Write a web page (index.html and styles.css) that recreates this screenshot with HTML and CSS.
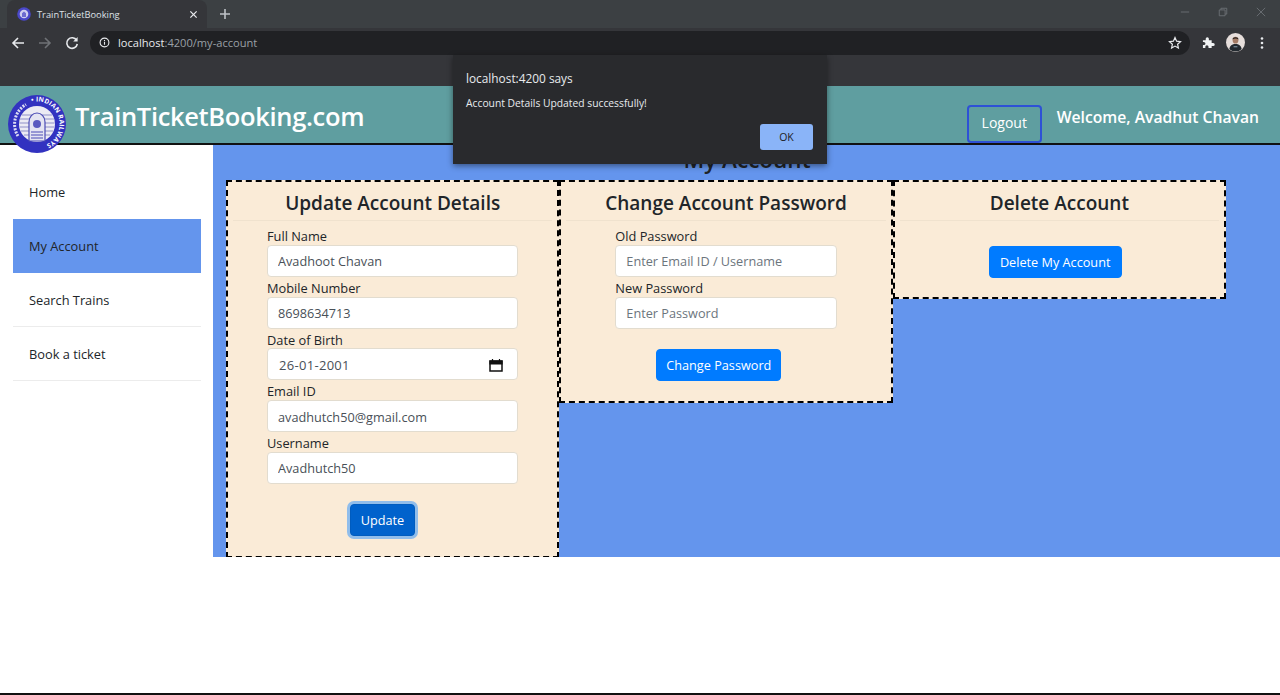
FILE: index.html
```html
<!DOCTYPE html>
<html lang="en">
<head>
  <meta charset="UTF-8" />
  <meta name="viewport" content="width=device-width, initial-scale=1" />
  <title>TrainTicketBooking</title>
  <link rel="stylesheet" href="styles.css">
</head>
<body>
  <!-- browser window top -->
  <div class="tabstrip">
    <div class="tab">
      <svg class="favicon" viewBox="0 0 14 14"><circle cx="7" cy="7" r="6.800" fill="#4a48c8"/><circle cx="7" cy="7" r="4.300" fill="#cfcdf0"/><path d="M5 10V6.200l2-1.700 2 1.700V10z" fill="#6d6bd0"/></svg>
      <span class="tab-title">TrainTicketBooking</span>
      <svg class="tab-close" viewBox="0 0 10 10"><path d="M1.500 1.500l7 7M8.500 1.500l-7 7" stroke="#e8eaed" stroke-width="1.400"/></svg>
    </div>
    <svg class="new-tab" viewBox="0 0 12 12"><path d="M6 1v10M1 6h10" stroke="#bdc1c6" stroke-width="1.600"/></svg>
    <div class="window-btns">
      <svg viewBox="0 0 12 12"><path d="M1 6h10" stroke="#70757a"/></svg>
      <svg viewBox="0 0 12 12"><path d="M1.500 3.500h7v7h-7zM3.500 3.500v-2h7v7h-2" fill="none" stroke="#70757a"/></svg>
      <svg viewBox="0 0 12 12"><path d="M1 1l10 10M11 1L1 11" stroke="#70757a"/></svg>
    </div>
  </div>
  <div class="toolbar">
    <svg class="tool" viewBox="0 0 14 14"><path d="M13 7H2M7 2L2 7l5 5" fill="none" stroke="#e8eaed" stroke-width="1.600"/></svg>
    <svg class="tool" viewBox="0 0 14 14"><path d="M1 7h11M7 2l5 5-5 5" fill="none" stroke="#6f7276" stroke-width="1.600"/></svg>
    <svg class="tool" viewBox="0 0 14 14"><path d="M11.600 4.200A5.300 5.300 0 1 0 12.300 8" fill="none" stroke="#e8eaed" stroke-width="1.600"/><path d="M12.600 1v4.400H8.200z" fill="#e8eaed"/></svg>
    <div class="omnibox">
      <svg class="info" viewBox="0 0 12 12"><circle cx="6" cy="6" r="4.800" fill="none" stroke="#e8eaed" stroke-width="1.200"/><path d="M6 5.200v3.200M6 3.400v1" stroke="#e8eaed" stroke-width="1.200"/></svg>
      <span class="url"><b>localhost</b>:4200/my-account</span>
      <svg class="star" viewBox="0 0 14 14"><path d="M7 1.600l1.600 3.600 3.900.4-2.900 2.600.8 3.800L7 10.100l-3.400 1.900.8-3.800L1.500 5.600l3.900-.4z" fill="none" stroke="#e8eaed" stroke-width="1.200"/></svg>
    </div>
    <svg class="puzzle" viewBox="0 0 14 14"><path d="M1 4.500h3V3a1.700 1.700 0 0 1 3.400 0v1.500h3v3H12a1.700 1.700 0 0 1 0 3.400h-1.600V13H7v-1.300a1.700 1.700 0 0 0-3.400 0V13H1V9.800h1a1.700 1.700 0 0 0 0-3.400H1z" fill="#f1f3f4"/></svg>
    <svg class="avatar" viewBox="0 0 20 20"><circle cx="10" cy="10" r="10" fill="#e6dedb"/><ellipse cx="10" cy="7.500" rx="3" ry="3.600" fill="#a47c66"/><path d="M6.800 6.800C6.800 3.800 13.200 3.800 13.200 6.800 11.500 5.600 8.500 5.600 6.800 6.800z" fill="#221c1a"/><path d="M3.500 17c.5-4 3-5.500 6.500-5.500s6 1.500 6.500 5.500a10 10 0 0 1-13 0z" fill="#232a30"/><path d="M8 14.500h4" stroke="#8fa6b8"/></svg>
    <svg class="kebab" viewBox="0 0 4 14"><circle cx="2" cy="2.500" r="1.300" fill="#e8eaed"/><circle cx="2" cy="7" r="1.300" fill="#e8eaed"/><circle cx="2" cy="11.500" r="1.300" fill="#e8eaed"/></svg>
  </div>
  <div class="bookmarks"></div>

  <!-- the page -->
  <header class="site-header">
    <svg class="logo" viewBox="0 0 58 58">
      <defs><path id="ring" d="M29 29m-22.500 0a22.500 22.500 0 1 1 45 0a22.500 22.500 0 1 1-45 0"/></defs>
      <circle cx="29" cy="29" r="29" fill="#3232c0"/>
      <text class="logo-text"><textPath href="#ring" startOffset="21%">• INDIAN RAILWAYS</textPath></text>
      <path d="M10 41A22.500 22.500 0 0 1 18 9.500" fill="none" stroke="#dcdcf4" stroke-width="3" stroke-dasharray="2 1.200"/>
      <circle cx="29" cy="29" r="18" fill="#ecebf4"/>
      <path d="M14 20h30M12 24h34M11.500 28h35M12 32h34M13 36h32M16 40h26" stroke="#8f90c8" stroke-width="1"/>
      <path d="M21 46V27a8 9 0 0 1 16 0v19z" fill="#e4e4f2" stroke="#4b4bb5" stroke-width="1.200"/>
      <circle cx="29" cy="29" r="4" fill="#5a5ac0"/>
      <path d="M23 37h12M23 40h12M23 43h12" stroke="#4b4bb5" stroke-width="1.200"/>
    </svg>
    <div class="brand">TrainTicketBooking.com</div>
    <div class="header-right">
      <button class="logout">Logout</button>
      <div class="welcome">Welcome, Avadhut Chavan</div>
    </div>
  </header>

  <div class="layout">
    <nav class="sidebar">
      <a class="nav-item">Home</a>
      <a class="nav-item active">My Account</a>
      <a class="nav-item">Search Trains</a>
      <a class="nav-item">Book a ticket</a>
    </nav>

    <main class="content">
      <h2 class="page-title">My Account</h2>
      <div class="cards">
        <section class="card">
          <h3 class="card-title">Update Account Details</h3>
          <form class="form form-wide">
            <label>Full Name</label>
            <input class="field" value="Avadhoot Chavan">
            <label>Mobile Number</label>
            <input class="field" value="8698634713">
            <label>Date of Birth</label>
            <div class="field date-field">
              <span>26-01-2001</span>
              <svg viewBox="0 0 14 14"><path d="M1 3h12v10H1z" fill="none" stroke="#111" stroke-width="1.500"/><path d="M1 3h12v3H1zM3.500 1v2M10.500 1v2" fill="#111" stroke="#111" stroke-width="1.200"/></svg>
            </div>
            <label>Email ID</label>
            <input class="field" value="avadhutch50@gmail.com">
            <label>Username</label>
            <input class="field" value="Avadhutch50">
            <button type="button" class="btn btn-focus">Update</button>
          </form>
        </section>

        <section class="card">
          <h3 class="card-title">Change Account Password</h3>
          <form class="form form-narrow">
            <label>Old Password</label>
            <input class="field" placeholder="Enter Email ID / Username">
            <label>New Password</label>
            <input class="field" placeholder="Enter Password">
            <button type="button" class="btn btn-change">Change Password</button>
          </form>
        </section>

        <section class="card">
          <h3 class="card-title">Delete Account</h3>
          <div class="delete-body">
            <button type="button" class="btn">Delete My Account</button>
          </div>
        </section>
      </div>
    </main>
  </div>

  <div class="page-end"></div>

  <!-- alert() box -->
  <div class="alert-box">
    <div class="alert-origin">localhost:4200 says</div>
    <div class="alert-msg">Account Details Updated successfully!</div>
    <div class="alert-actions"><button class="alert-ok">OK</button></div>
  </div>
</body>
</html>
```

FILE: styles.css
```css
/* Reset & base */
* {
  box-sizing: border-box;
}
html, body {
  height: 695px;
  overflow: hidden;
}
body {
  margin: 0;
  display: flex;
  flex-direction: column;
  background: #fff;
  color: #212529;
  font-family: 'Open Sans', 'Noto Sans', sans-serif;
  font-size: 12.700px;
}

/* Browser top */
.tabstrip {
  height: 28px;
  background: #3c4043;
  display: flex;
  align-items: center;
  padding-left: 7px;
}
.tab {
  width: 200px;
  height: 28px;
  background: #35363a;
  border-radius: 8px 8px 0 0;
  display: flex;
  align-items: center;
  padding: 0 9px 0 10px;
}
.favicon {
  width: 14px;
  height: 14px;
  margin-right: 6px;
}
.tab-title {
  flex: 1;
  font-size: 9.300px;
  color: #dee1e6;
}
.tab-close {
  width: 9px;
  height: 9px;
}
.new-tab {
  width: 12px;
  height: 12px;
  margin-left: 12px;
}
.window-btns {
  margin-left: auto;
  display: flex;
  gap: 28px;
  padding-right: 14px;
  margin-top: -4px;
}
.window-btns svg {
  width: 10px;
  height: 10px;
}
.toolbar {
  height: 29px;
  background: #35363a;
  display: flex;
  align-items: center;
  padding-left: 11px;
}
.tool {
  width: 14px;
  height: 14px;
  margin-right: 13px;
}
.omnibox {
  width: 1100px;
  height: 24px;
  margin-left: -2px;
  border-radius: 12px;
  background: #202124;
  display: flex;
  align-items: center;
  padding: 0 8px 0 9px;
}
.info {
  width: 11px;
  height: 11px;
  margin-right: 8px;
}
.url {
  flex: 1;
  font-size: 11.100px;
  color: #9aa0a6;
}
.url b {
  font-weight: 400;
  color: #e8eaed;
}
.star {
  width: 14px;
  height: 14px;
}
.puzzle {
  width: 13px;
  height: 13px;
  margin-left: 12px;
}
.avatar {
  width: 19px;
  height: 19px;
  margin-left: 11px;
}
.kebab {
  width: 4px;
  height: 14px;
  margin-left: 15px;
}
.bookmarks {
  height: 29px;
  background: #35363a;
}

/* Header */
.site-header {
  height: 59px;
  background: #5f9ea0;
  border-bottom: 2px solid #111;
  display: flex;
  align-items: flex-start;
  padding-left: 8px;
}
.logo {
  width: 58px;
  height: 58px;
  margin-top: 9px;
  flex-shrink: 0;
  position: relative;
  z-index: 2;
}
.logo-text {
  font-size: 6.500px;
  font-weight: 700;
  letter-spacing: 0.2px;
  fill: #fff;
}
.brand {
  margin: 8px 0 0 9px;
  font-size: 25.500px;
  font-weight: 600;
  letter-spacing: -0.34px;
  line-height: 44px;
  color: #fff;
}
.header-right {
  margin-left: auto;
  display: flex;
  align-items: flex-start;
  padding-right: 21px;
}
.logout {
  width: 75px;
  height: 38px;
  margin-top: 19px;
  padding-bottom: 4px;
  border: 2px solid #2e51d6;
  border-radius: 4px;
  background: transparent;
  color: #fff;
  font: inherit;
  font-size: 14px;
}
.welcome {
  margin: 18px 0 0 15px;
  font-size: 15.700px;
  font-weight: 600;
  line-height: 26px;
  color: #fff;
}

/* Sidebar + content */
.layout {
  display: flex;
  height: 412px;
}
.sidebar {
  width: 213px;
  padding: 20px 12px 0 13px;
  flex-shrink: 0;
}
.nav-item {
  display: flex;
  align-items: center;
  height: 54px;
  padding-left: 16px;
  border-bottom: 1px solid #ececec;
  font-size: 12.800px;
}
.nav-item:first-child {
  border-bottom-color: transparent;
}
.nav-item.active {
  background: #6495ed;
  border-color: #6495ed;
}
.content {
  flex: 1;
  background: #6495ed;
  padding: 0 54px 0 13px;
  overflow: hidden;
}
.page-title {
  margin: 0;
  height: 35px;
  padding-left: 42px;
  text-align: center;
  font-size: 22.500px;
  font-weight: 600;
  line-height: 29px;
}
.cards {
  display: flex;
  align-items: flex-start;
}
.card {
  width: 333.500px;
  background: #faebd7;
  border: 2px dashed #000;
}
/* taller than the blue area, so its bottom edge gets cut */
.card:first-child {
  height: 378px;
}
.card-title {
  margin: 0 5px;
  height: 39px;
  border-bottom: 1px solid #f0e2ce;
  text-align: center;
  font-size: 19px;
  font-weight: 600;
  line-height: 43px;
}

/* Forms */
.form {
  display: flex;
  flex-direction: column;
  align-items: flex-start;
  margin-left: 39px;
  padding-top: 4px;
}
.form label {
  height: 19.750px;
  line-height: 23px;
  font-size: 12.800px;
}
.form-wide {
  width: 250.500px;
}
.form-narrow {
  width: 222px;
  margin-left: 54px;
  padding-bottom: 20px;
}
.field {
  width: 100%;
  height: 32px;
  flex-shrink: 0;
  padding: 1px 10px 0;
  border: 1px solid #e2dccf;
  border-radius: 4px;
  background: #fff;
  color: #495057;
  font: inherit;
  font-size: 12.700px;
}
.field::placeholder {
  color: #6c757d;
}
.date-field {
  display: flex;
  align-items: center;
  justify-content: space-between;
  padding: 1px 14px 0 11px;
  font-size: 13px;
  letter-spacing: 0.3px;
}
.date-field svg {
  width: 14px;
  height: 14px;
}
.btn {
  height: 32px;
  padding: 0 8px;
  border: 1px solid #007bff;
  border-radius: 4px;
  background: #007bff;
  color: #fff;
  font: inherit;
  font-size: 12.700px;
  white-space: nowrap;
}
.btn-focus {
  margin: 20px 0 0 83px;
  width: 65px;
  background: #0062cc;
  border-color: #005cbf;
  box-shadow: 0 0 0 3px rgba(38, 143, 255, 0.5);
}
.btn-change {
  margin: 20px 0 0 41px;
  width: 125px;
}
.delete-body {
  height: 76px;
  padding: 25px 0 0 94px;
}
.delete-body .btn {
  width: 133px;
}

.page-end {
  margin-top: auto;
  height: 2px;
  background: #111;
}

/* Alert dialog */
.alert-box {
  position: absolute;
  left: 453px;
  top: 55px;
  width: 374px;
  height: 109px;
  background: #292a2d;
  box-shadow: 0 2px 6px rgba(0, 0, 0, 0.45);
  padding: 15px 14px 0 13px;
  color: #e8eaed;
}
.alert-origin {
  font-size: 11.850px;
  line-height: 16px;
}
.alert-msg {
  margin-top: 10px;
  font-size: 10.300px;
  line-height: 15px;
}
.alert-actions {
  display: flex;
  justify-content: flex-end;
  margin-top: 13px;
}
.alert-ok {
  width: 53px;
  height: 26px;
  border: none;
  border-radius: 3px;
  background: #8ab4f8;
  color: #202124;
  font: inherit;
  font-size: 10.500px;
}
```
